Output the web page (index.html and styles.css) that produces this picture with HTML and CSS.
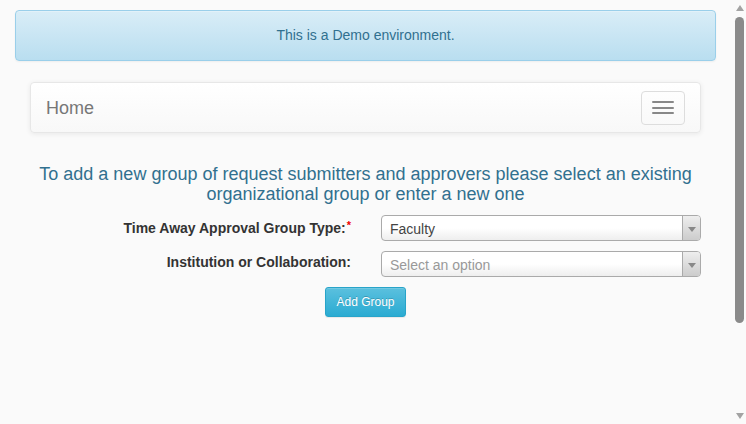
FILE: index.html
```html
<!DOCTYPE html>
<html>
<head>
<meta charset="utf-8">
<link rel="stylesheet" href="styles.css">
</head>
<body>
<div class="viewport">
<div class="page">
  <div class="alert">This is a Demo environment.</div>
  <div class="inner">
    <nav class="navbar">
      <span class="brand">Home</span>
      <button class="toggle" type="button" aria-label="Toggle navigation">
        <span class="bar"></span><span class="bar"></span><span class="bar"></span>
      </button>
    </nav>
    <h4 class="intro">To add a new group of request submitters and approvers please select an existing organizational group or enter a new one</h4>
    <form class="form">
      <div class="row">
        <label class="label">Time Away Approval Group Type:<span class="req">*</span></label>
        <div class="select"><span class="value">Faculty</span><span class="arrow"><b></b></span></div>
      </div>
      <div class="row">
        <label class="label">Institution or Collaboration:</label>
        <div class="select"><span class="value placeholder">Select an option</span><span class="arrow"><b></b></span></div>
      </div>
      <div class="actions">
        <button class="btn" type="button">Add Group</button>
      </div>
    </form>
  </div>
</div>
<div class="scrollbar" aria-hidden="true">
  <span class="sb-up"></span>
  <span class="sb-thumb"></span>
  <span class="sb-down"></span>
</div>
</div>
</body>
</html>
```
FILE: styles.css
```css
html, body {
  margin: 0;
  padding: 0;
  height: 100%;
  overflow: hidden;
}
body {
  background: #fafafa;
  font-family: "Liberation Sans", Arial, sans-serif;
  font-size: 14px;
  line-height: 1.42857;
  color: #333;
}
.viewport {
  display: flex;
  height: 100%;
}
.page {
  flex: 1;
  min-width: 0;
  padding: 10px 15px 0;
  box-sizing: border-box;
}
.scrollbar {
  width: 15px;
  flex: none;
  background: #fafafa;
  display: flex;
  flex-direction: column;
  align-items: center;
  padding: 5px 0 5px 2px;
  box-sizing: border-box;
}
.sb-up, .sb-down {
  width: 0;
  height: 0;
  border-left: 4px solid transparent;
  border-right: 4px solid transparent;
}
.sb-up {
  border-bottom: 6px solid #a3a3a3;
}
.sb-down {
  border-top: 6px solid #a3a3a3;
  margin-top: auto;
}
.sb-thumb {
  width: 9px;
  height: 306px;
  margin-top: 6px;
  border-radius: 5px;
  background: #8a8a8a;
}
.alert {
  height: 51px;
  box-sizing: border-box;
  border: 1px solid #9acfea;
  border-radius: 4px;
  background: linear-gradient(to bottom, #d9edf7 0%, #b9def0 100%);
  color: #31708f;
  display: flex;
  align-items: center;
  justify-content: center;
  box-shadow: inset 0 1px 0 rgba(255,255,255,.25), 0 1px 2px rgba(0,0,0,.05);
  margin-bottom: 21px;
}
.inner {
  padding: 0 15px;
}
.navbar {
  height: 51px;
  box-sizing: border-box;
  border: 1px solid #e7e7e7;
  border-radius: 4px;
  background: linear-gradient(to bottom, #ffffff 0%, #f8f8f8 100%);
  box-shadow: inset 0 1px 0 rgba(255,255,255,.15), 0 1px 5px rgba(0,0,0,.075);
  display: flex;
  align-items: flex-start;
  justify-content: space-between;
}
.brand {
  padding: 15px;
  font-size: 18px;
  line-height: 20px;
  color: #777;
}
.toggle {
  margin: 8px 15px 0 0;
  width: 44px;
  height: 34px;
  box-sizing: border-box;
  border: 1px solid #ddd;
  border-radius: 4px;
  background: transparent;
  display: flex;
  flex-direction: column;
  justify-content: space-between;
  align-items: center;
  padding: 9px 10px 10px;
  cursor: pointer;
}
.bar {
  display: block;
  width: 22px;
  height: 2px;
  border-radius: 1px;
  background: #888;
}
.intro {
  margin: 31px 0 0;
  text-align: center;
  font-size: 18px;
  font-weight: normal;
  line-height: 20px;
  color: #31708f;
  padding: 0 6px;
}
.form {
  margin-top: 11px;
  display: flex;
  flex-direction: column;
  gap: 10px;
}
.row {
  display: grid;
  grid-template-columns: 321px 320px;
  column-gap: 30px;
  align-items: center;
}
.label {
  text-align: right;
  font-weight: bold;
  color: #333;
  font-size: 14px;
  line-height: 20px;
  margin-top: -4px;
}
.req {
  color: #e00;
  font-size: 11px;
  vertical-align: 4px;
  margin-left: 1px;
}
.select {
  height: 26px;
  box-sizing: border-box;
  border: 1px solid #aaa;
  border-radius: 4px;
  background: linear-gradient(to bottom, #ffffff 0%, #ffffff 50%, #eeeeee 100%);
  display: flex;
  align-items: stretch;
  overflow: hidden;
}
.value {
  flex: 1;
  padding-left: 8px;
  line-height: 26px;
  color: #444;
}
.value.placeholder {
  color: #999;
}
.arrow {
  width: 17px;
  border-left: 1px solid #aaa;
  background: linear-gradient(to bottom, #eeeeee 0%, #cccccc 100%);
  display: flex;
  align-items: center;
  justify-content: center;
}
.arrow b {
  width: 0;
  height: 0;
  border-left: 4px solid transparent;
  border-right: 4px solid transparent;
  border-top: 5px solid #888;
  margin-top: 2px;
}
.actions {
  display: flex;
  justify-content: center;
}
.btn {
  height: 30px;
  padding: 5px 10px;
  font-family: "Liberation Sans", Arial, sans-serif;
  font-size: 12px;
  line-height: 18px;
  color: #fff;
  border: 1px solid #28a4c9;
  border-radius: 3px;
  background: linear-gradient(to bottom, #5bc0de 0%, #2aabd2 100%);
  box-shadow: inset 0 1px 0 rgba(255,255,255,.15), 0 1px 1px rgba(0,0,0,.075);
  text-shadow: 0 -1px 0 rgba(0,0,0,.2);
  cursor: pointer;
}
```
